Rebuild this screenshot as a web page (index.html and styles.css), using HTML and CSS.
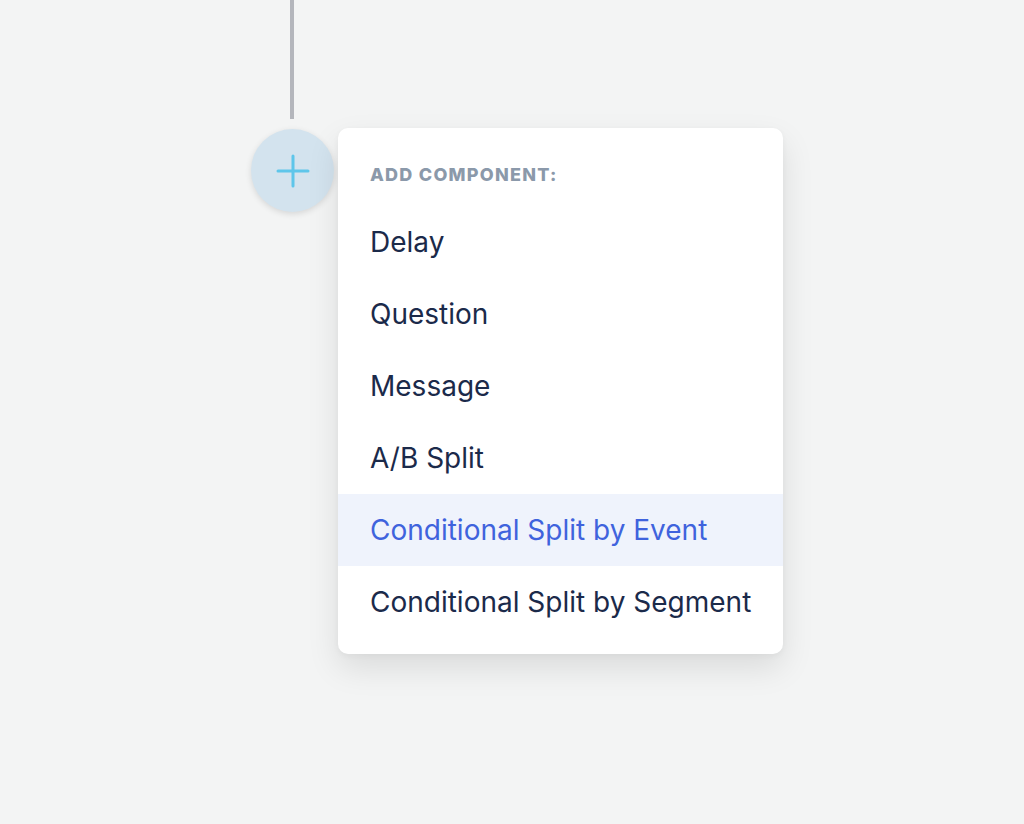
FILE: index.html
```html
<!DOCTYPE html>
<html>
<head>
<meta charset="utf-8">
<link rel="stylesheet" href="styles.css">
</head>
<body>
<div class="canvas">
  <div class="connector"></div>
  <button class="add-btn" aria-label="Add component">
    <svg width="34" height="34" viewBox="0 0 34 34"><path d="M17 2v30M2 17h30" stroke="#5ec6ea" stroke-width="3" stroke-linecap="round" fill="none"/></svg>
  </button>
  <div class="menu">
    <div class="menu-title">ADD COMPONENT:</div>
    <ul class="menu-list">
      <li class="menu-item">Delay</li>
      <li class="menu-item">Question</li>
      <li class="menu-item">Message</li>
      <li class="menu-item">A/B Split</li>
      <li class="menu-item active">Conditional Split by Event</li>
      <li class="menu-item">Conditional Split by Segment</li>
    </ul>
  </div>
</div>
</body>
</html>
```
FILE: styles.css
```css
html, body {
  margin: 0;
  padding: 0;
  background: #f3f4f4;
  font-family: Inter, "Noto Sans", sans-serif;
}
.canvas {
  position: relative;
  width: 1024px;
  height: 824px;
  overflow: hidden;
}
.connector {
  position: absolute;
  left: 290px;
  top: 0;
  width: 4px;
  height: 119px;
  background: #b4b6bc;
}
.add-btn {
  position: absolute;
  left: 251px;
  top: 129px;
  width: 83px;
  height: 83px;
  border-radius: 50%;
  border: none;
  padding: 0;
  background: #d3e3ee;
  box-shadow: 0 2px 6px rgba(0, 0, 0, 0.12);
  display: flex;
  align-items: center;
  justify-content: center;
}
.menu {
  position: absolute;
  left: 338px;
  top: 128px;
  width: 445px;
  box-sizing: border-box;
  padding: 32px 0 16px;
  background: #ffffff;
  border-radius: 10px;
  box-shadow: 0 14px 32px rgba(0, 0, 0, 0.10), 0 2px 6px rgba(0, 0, 0, 0.04);
}
.menu-title {
  padding: 0 32px;
  font-size: 18px;
  line-height: 30px;
  font-weight: 800;
  letter-spacing: 1.25px;
  color: #8b99aa;
  margin-bottom: 16px;
  white-space: nowrap;
}
.menu-list {
  list-style: none;
  margin: 0;
  padding: 0;
}
.menu-item {
  height: 72px;
  display: flex;
  align-items: center;
  padding: 0 0 0 32px;
  font-size: 28px;
  color: #1b2a4a;
  white-space: nowrap;
}
.menu-item.active {
  background: #eff3fc;
  color: #3f63dd;
}
```
